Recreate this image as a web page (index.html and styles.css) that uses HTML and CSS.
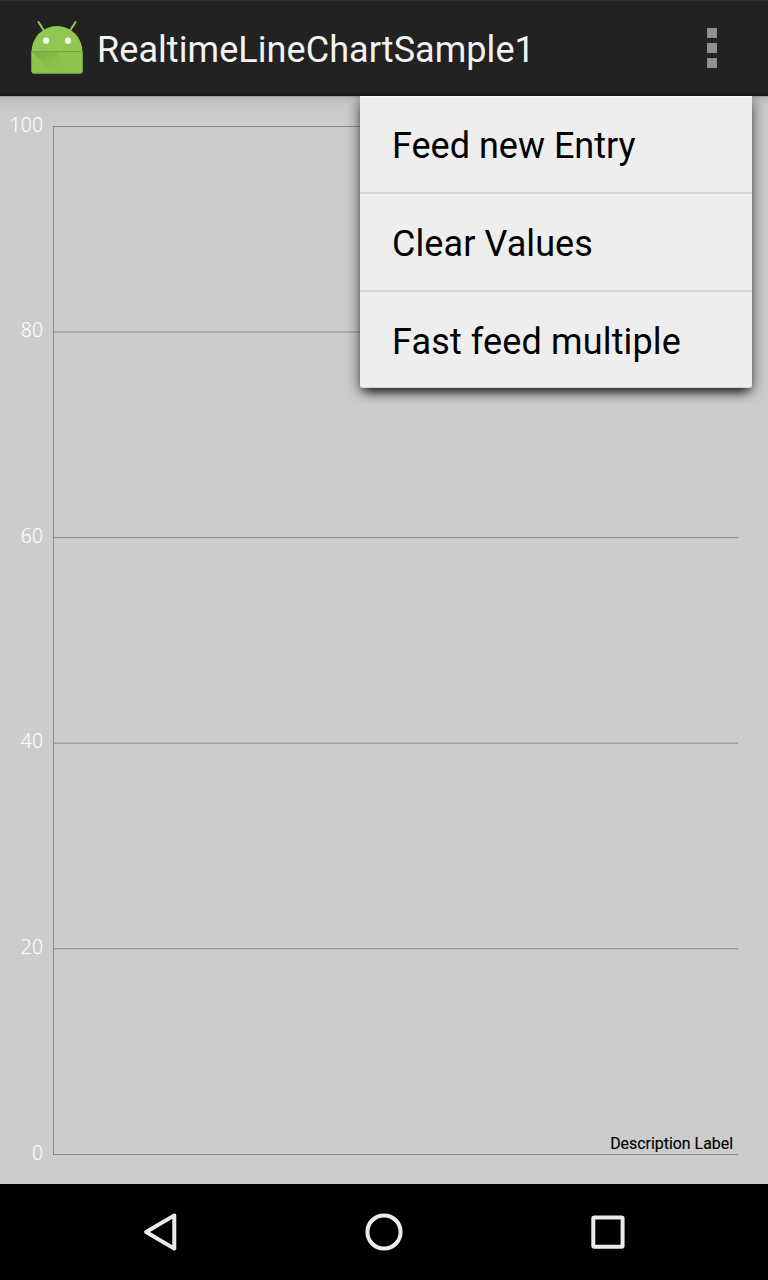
FILE: index.html
```html
<!DOCTYPE html>
<html lang="en">
<head>
<meta charset="utf-8">
<title>RealtimeLineChartSample1</title>
<link rel="stylesheet" href="styles.css">
</head>
<body>
<div class="screen">
  <header class="action-bar">
    <svg class="app-icon" width="64" height="64" viewBox="0 0 64 64">
      <defs>
        <linearGradient id="fold" x1="0" y1="0" x2="1" y2="1">
          <stop offset="0" stop-color="#6d9a3c" stop-opacity=".65"/>
          <stop offset="1" stop-color="#8bc34a" stop-opacity="0"/>
        </linearGradient>
      </defs>
      <path d="M13.500 6l5 8M50.500 6l-5 8" stroke="#8fc754" stroke-width="2" stroke-linecap="round"/>
      <path d="M6.500 36a25.500 26 0 0 1 51 0v19a2.500 2.500 0 0 1-2.500 2.500H9a2.500 2.500 0 0 1-2.500-2.500z" fill="#8fc751"/>
      <path d="M6.500 35.500h51V55a2.500 2.500 0 0 1-2.500 2.500H9a2.500 2.500 0 0 1-2.500-2.500z" fill="#8dc54b"/>
      <path d="M7 36h25l9 21.500H28z" fill="url(#fold)"/>
      <path d="M6.500 35.500h51" stroke="#76a842" stroke-width="1"/>
      <path d="M8.500 57.300h47" stroke="#6f983f" stroke-width=".8"/>
      <circle cx="21" cy="24.700" r="3.100" fill="#f6f8f3"/>
      <circle cx="43" cy="24.700" r="3.100" fill="#f6f8f3"/>
    </svg>
    <h1 class="title">RealtimeLineChartSample1</h1>
    <div class="overflow"><i class="dot"></i><i class="dot"></i><i class="dot"></i></div>
  </header>
  <main class="content">
    <svg class="chart" width="768" height="1088" viewBox="0 96 768 1088">
      <g class="grid">
        <path d="M53 126.500H738M53 332H738M53 537.600H738M53 743.200H738M53 948.800H738M53 1154.500H738"/>
        <path d="M53.500 126V1155"/>
      </g>
      <g class="axis-labels">
        <text x="43" y="132">100</text>
        <text x="43" y="337">80</text>
        <text x="43" y="543">60</text>
        <text x="43" y="748">40</text>
        <text x="43" y="954">20</text>
        <text x="43" y="1160">0</text>
      </g>
      <text class="description" x="733" y="1149">Description Label</text>
    </svg>
    <div class="menu-layer">
      <ul class="menu">
        <li class="menu-item">Feed new Entry</li>
        <li class="menu-item spaced">Clear Values</li>
        <li class="menu-item spaced-wide">Fast feed multiple</li>
      </ul>
    </div>
  </main>
  <nav class="nav-bar">
    <svg width="48" height="48" viewBox="0 0 48 48"><path d="M30.200 7.400L2 24l28.200 16.600z" transform="translate(8.100 0)" class="nav-shape nav-back"/></svg>
    <svg width="48" height="48" viewBox="0 0 48 48"><circle cx="24" cy="24" r="16.600" class="nav-shape"/></svg>
    <svg width="48" height="48" viewBox="0 0 48 48"><rect x="9.300" y="9.500" width="29.300" height="29.300" rx="1" class="nav-shape"/></svg>
  </nav>
</div>
</body>
</html>
```
FILE: styles.css
```css
body {
  margin: 0;
  background: #000;
  font-family: Roboto, sans-serif;
}
.screen {
  display: flex;
  flex-direction: column;
  width: 768px;
  height: 1280px;
  overflow: hidden;
}
.action-bar {
  display: flex;
  align-items: center;
  box-sizing: border-box;
  height: 96px;
  padding: 0 51px 0 25px;
  background: linear-gradient(#2f2f2f 0 1px, #222 1px 92px, #151515 96px);
}
.app-icon {
  margin-right: 8px;
}
.title {
  flex: 1;
  margin: 0;
  padding-top: 3px;
  font-size: 36px;
  font-weight: 400;
  line-height: 42px;
  letter-spacing: .06px;
  color: #f3f3f3;
}
.overflow {
  display: flex;
  flex-direction: column;
  gap: 5px;
}
.dot {
  width: 10px;
  height: 10px;
  background: #919191;
}
.content {
  position: relative;
  height: 1088px;
  background: linear-gradient(#8e8e8e 0, #b3b3b3 1px, #c2c2c2 4px, #c8c8c8 10px, #ccc 22px);
}
.chart {
  display: block;
}
.grid {
  fill: none;
  stroke: #888;
  stroke-width: 1;
}
.axis-labels {
  font: 300 19.400px "Open Sans", sans-serif;
  fill: #fff;
  stroke: #fff;
  stroke-width: .2px;
  text-anchor: end;
}
.description {
  font: 15.900px Roboto, sans-serif;
  fill: #000;
  stroke: #000;
  stroke-width: .15px;
  text-anchor: end;
}
/* Clips the popup shadow at the action bar edge */
.menu-layer {
  position: absolute;
  top: 0;
  right: 0;
  padding: 0 16px 16px;
  overflow: hidden;
}
.menu {
  box-sizing: border-box;
  width: 392px;
  height: 292px;
  margin: 0;
  padding: 0;
  list-style: none;
  background: #eee;
  border-radius: 0 0 3px 3px;
  box-shadow: inset 0 2px 1px #f8f8f8, inset 0 -1px #d5d5d5, 0 3px 14px rgba(0, 0, 0, .6), 0 8px 10px -5px rgba(0, 0, 0, .7);
}
.menu-item {
  box-sizing: border-box;
  height: 98px;
  padding: 29px 32px 0;
  border-bottom: 2px solid #d6d6d6;
  font-size: 36px;
  line-height: 42px;
  color: #000;
}
.menu-item:last-child {
  height: 96px;
  border-bottom: 0;
}
.spaced {
  letter-spacing: .08px;
}
.spaced-wide {
  letter-spacing: .14px;
}
.nav-bar {
  display: flex;
  align-items: center;
  justify-content: space-between;
  box-sizing: border-box;
  height: 96px;
  padding: 0 136px;
  background: #000;
}
.nav-shape {
  fill: none;
  stroke: #ebebeb;
  stroke-width: 4;
}
.nav-back {
  stroke-linejoin: round;
}
```
